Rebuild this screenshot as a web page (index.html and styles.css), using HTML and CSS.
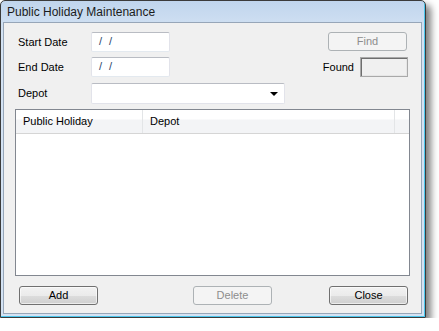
FILE: index.html
```html
<!DOCTYPE html>
<html>
<head>
<meta charset="utf-8">
<link rel="stylesheet" href="styles.css">
</head>
<body>
<div class="window">
  <div class="titlebar">Public Holiday Maintenance</div>
  <div class="client">
    <div class="top">
      <div class="fields">
        <label class="lbl">Start Date</label>
        <div class="textbox">/ /</div>
        <label class="lbl">End Date</label>
        <div class="textbox">/ /</div>
        <label class="lbl depot-lbl">Depot</label>
        <div class="combo"><span class="arrow"></span></div>
      </div>
      <div class="side">
        <button class="btn disabled">Find</button>
        <div class="found-row">
          <span class="lbl">Found</span>
          <div class="found-box"></div>
        </div>
      </div>
    </div>
    <div class="list">
      <div class="list-header">
        <div class="col c1">Public Holiday</div>
        <div class="col c2">Depot</div>
        <div class="col c3"></div>
      </div>
    </div>
    <div class="footer">
      <button class="btn">Add</button>
      <button class="btn disabled delete">Delete</button>
      <button class="btn close">Close</button>
    </div>
  </div>
</div>
</body>
</html>
```
FILE: styles.css
```css
* { box-sizing: border-box; }
html, body { margin: 0; padding: 0; background: #ffffff; }
body {
  font-family: "Liberation Sans", Arial, sans-serif;
  font-size: 11px;
  color: #000;
}
.window {
  width: 426px;
  height: 318px;
  border: 1px solid #3b3b3b;
  background: linear-gradient(#c0d5ed, #d3e2f3 30px, #d3e2f3);
  box-shadow: inset -1px -1px 0 #4bc6ec, 5px 5px 7px rgba(0,0,0,0.5);
  display: flex;
  flex-direction: column;
  border-radius: 5px 5px 0 0;
}
.titlebar {
  height: 21px;
  padding: 4px 0 0 6px;
  font-size: 12px;
  color: #1b1b1b;
  line-height: 14px;
}
.client {
  margin: 0 3px 3px 2px;
  flex: 1;
  background: #f0f0f0;
  border: 1px solid #97a6b8;
  padding: 9px 11px 0 11px;
  display: flex;
  flex-direction: column;
}
.top {
  display: flex;
  justify-content: space-between;
}
.fields {
  display: grid;
  grid-template-columns: 76px auto;
  grid-template-rows: 20px 20px 21px;
  row-gap: 5px;
}
.depot-lbl { margin-top: 1px; }
.lbl {
  display: flex;
  align-items: center;
  padding-left: 3px;
  color: #000;
}
.textbox {
  width: 79px;
  height: 20px;
  background: #fff;
  border: 1px solid #e2e3ea;
  border-top-color: #b9bcc3;
  border-bottom-color: #e3e9ef;
  border-radius: 2px;
  padding: 2px 0 0 7px;
  color: #2a3f6a;
  letter-spacing: 2px;
}
.combo {
  margin-top: 1px;
  width: 194px;
  height: 21px;
  background: #fff;
  border: 1px solid #e2e3ea;
  border-top-color: #b9bcc3;
  border-radius: 2px;
  position: relative;
}
.arrow {
  position: absolute;
  right: 6px;
  top: 8px;
  width: 0;
  height: 0;
  border-left: 4px solid transparent;
  border-right: 4px solid transparent;
  border-top: 4px solid #000;
}
.side {
  display: flex;
  flex-direction: column;
  align-items: flex-end;
  padding-right: 2px;
  gap: 6px;
}
.side .btn { margin-right: 1px; }
.found-row {
  display: flex;
  align-items: center;
  gap: 6px;
}
.found-row .lbl { padding: 0; }
.found-box {
  width: 48px;
  height: 20px;
  border: 1px solid #a9a9a9;
  box-shadow: inset 1px 1px 0 #6e6e6e, inset -1px -1px 0 #e6e6e6;
  background: #f0f0f0;
}
.btn {
  width: 79px;
  height: 19px;
  font-family: "Liberation Sans", Arial, sans-serif;
  font-size: 11px;
  color: #000;
  border: 1px solid #707070;
  border-radius: 3px;
  background: linear-gradient(#f2f2f2, #ebebeb 50%, #dddddd 51%, #cfcfcf);
  box-shadow: inset 0 0 0 1px rgba(255,255,255,0.6);
  padding: 0;
  line-height: 15px;
}
.btn.disabled {
  color: #8d8d8d;
  border-color: #adb2b5;
  background: #f4f4f4;
  box-shadow: none;
}
.list {
  margin-top: 6px;
  height: 167px;
  background: #fff;
  border: 1px solid #828790;
}
.list-header {
  display: flex;
  height: 24px;
  background: linear-gradient(#ffffff 0, #ffffff 9px, #f3f4f6 10px, #f3f4f6);
  border-bottom: 1px solid #d5d5d5;
}
.col {
  padding: 5px 0 0 7px;
  border-right: 1px solid #e3e5e7;
  color: #000;
}
.c1 { width: 127px; }
.c2 { width: 252px; }
.c3 { flex: 1; border-right: none; }
.footer {
  display: flex;
  margin-top: 10px;
  padding: 0 0 0 4px;
}
.footer .delete { margin-left: 95px; }
.footer .close { margin-left: 57px; }
```
